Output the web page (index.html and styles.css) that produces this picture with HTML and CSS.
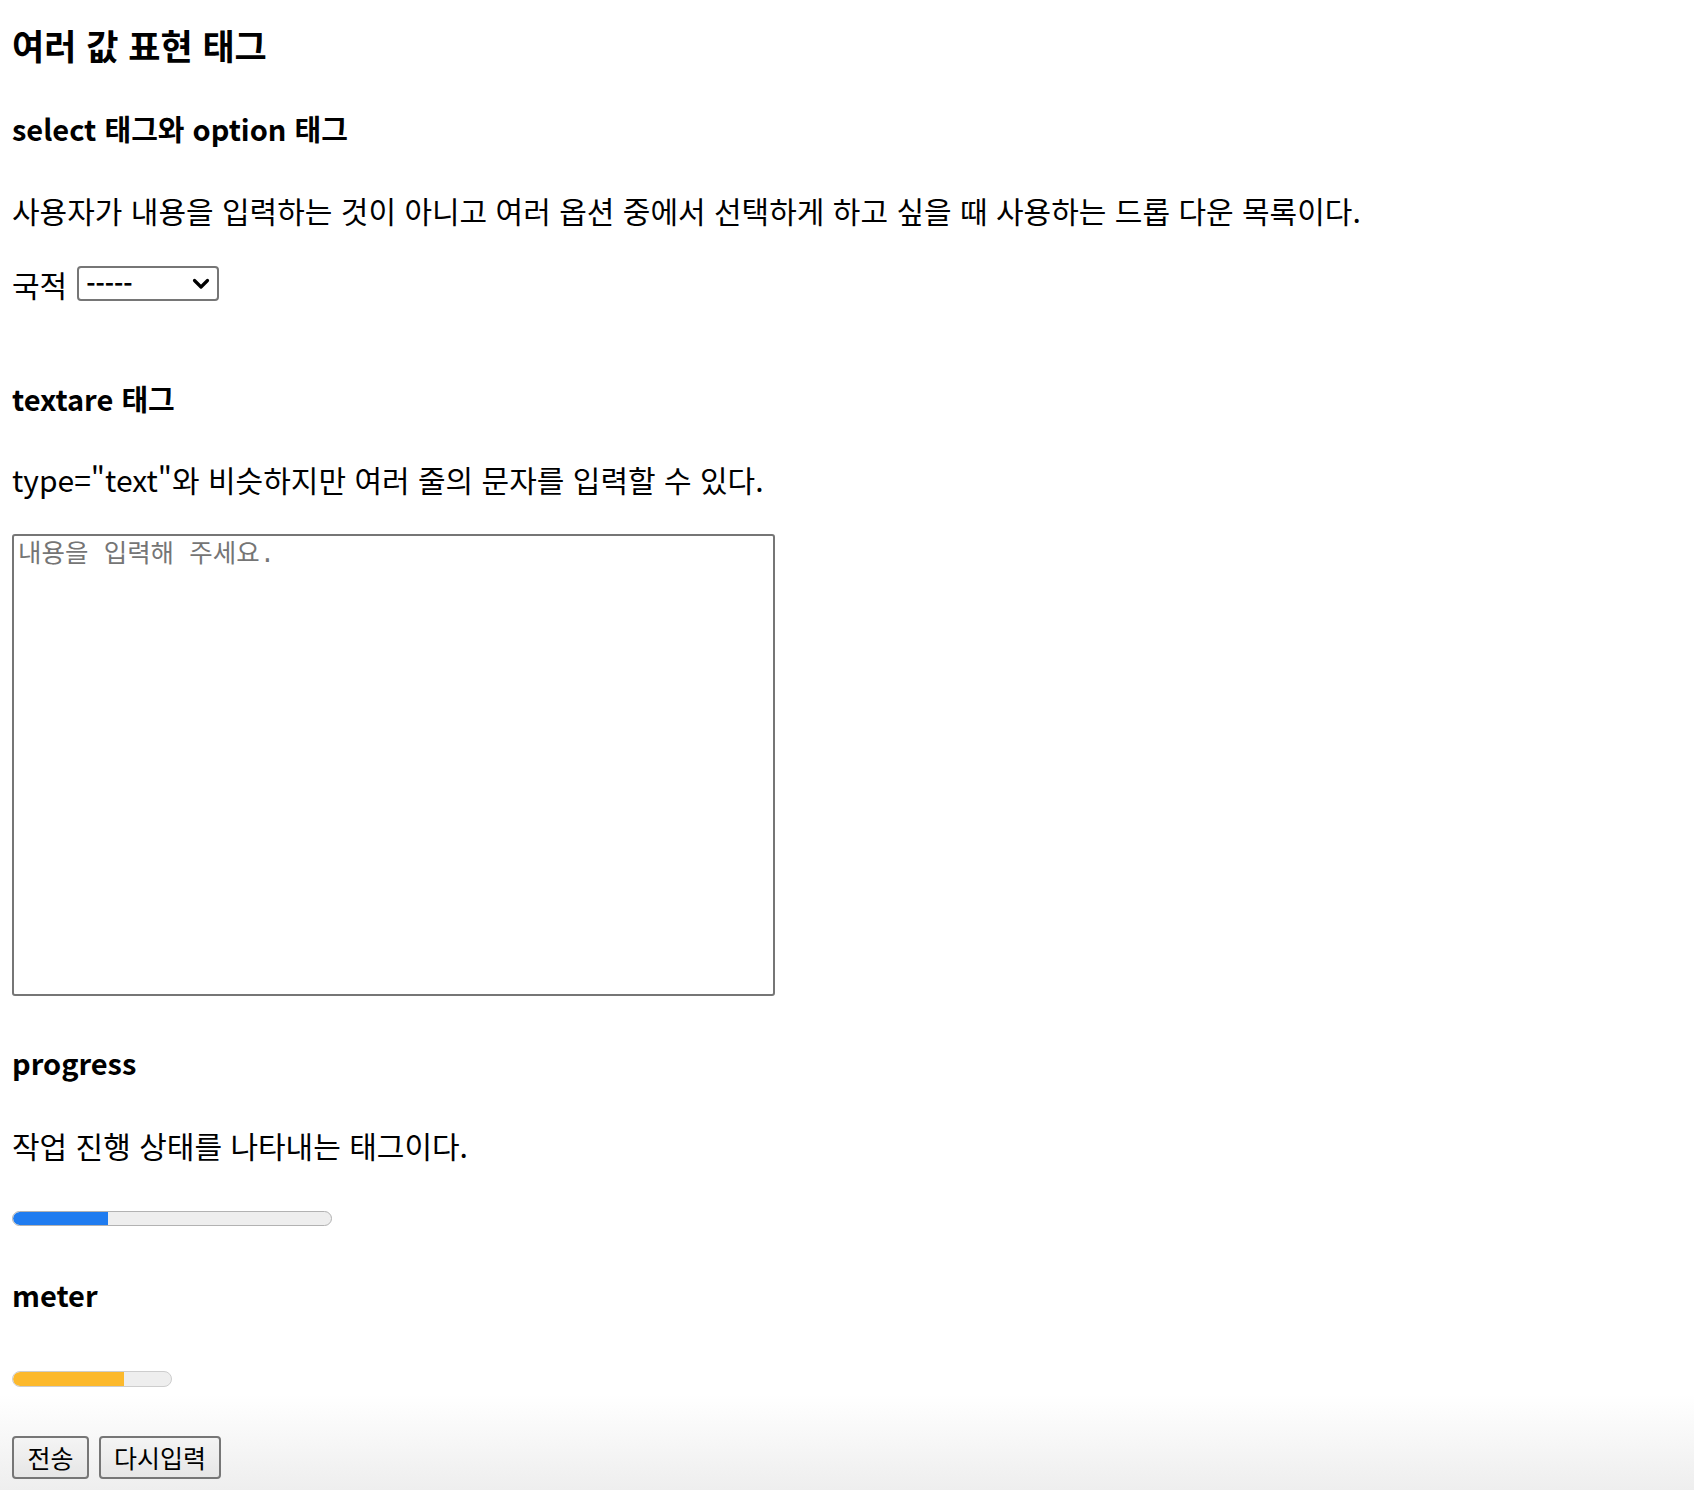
FILE: index.html
```html
<!DOCTYPE html>
<html lang="ko">
<head>
<meta charset="utf-8">
<title>여러 값 표현 태그</title>
<link rel="stylesheet" href="styles.css">
</head>
<body>
<form class="page">
  <h1 class="title">여러 값 표현 태그</h1>

  <h3 class="sub sub-select">select 태그와 option 태그</h3>
  <p class="desc desc-select">사용자가 내용을 입력하는 것이 아니고 여러 옵션 중에서 선택하게 하고 싶을 때 사용하는 드롭 다운 목록이다.</p>
  <div class="field">
    <label class="field-label" for="nation">국적</label>
    <span class="select-wrap">
      <select id="nation" class="select">
        <option>-----</option>
        <option>대한민국</option>
        <option>미국</option>
        <option>일본</option>
      </select>
      <svg class="chevron" width="18" height="12" viewBox="0 0 18 12" aria-hidden="true">
        <path d="M2.5 2.5 L9 9 L15.5 2.5" fill="none" stroke="#000" stroke-width="3.2" stroke-linecap="round" stroke-linejoin="round"/>
      </svg>
    </span>
  </div>

  <h3 class="sub sub-textarea">textare 태그</h3>
  <p class="desc desc-textarea">type="text"와 비슷하지만 여러 줄의 문자를 입력할 수 있다.</p>
  <textarea class="memo" placeholder="내용을 입력해 주세요."></textarea>

  <h3 class="sub sub-progress">progress</h3>
  <p class="desc desc-progress">작업 진행 상태를 나타내는 태그이다.</p>
  <progress class="bar" value="30" max="100"></progress>

  <h3 class="sub sub-meter">meter</h3>
  <meter class="gauge" value="0.7" min="0" max="1"></meter>

  <div class="actions">
    <button type="submit" class="btn btn-send">전송</button>
    <button type="reset" class="btn btn-reset">다시입력</button>
  </div>
</form>
</body>
</html>
```
FILE: styles.css
```css
html {
  background: linear-gradient(to bottom, #ffffff 0, #ffffff 1395px, #eeeeee 1490px);
  min-height: 100%;
}

body {
  margin: 0;
  padding: 0 12px;
  font-family: "Noto Sans CJK KR", "Noto Sans", sans-serif;
  color: #000;
}

.page {
  display: block;
}

.title {
  margin: 24px 0 0;
  font-size: 35px;
  line-height: 42px;
  font-weight: 700;
}

.sub {
  margin: 0;
  font-size: 29px;
  line-height: 36px;
  font-weight: 700;
}

.sub-select { margin-top: 44px; }
.sub-textarea { margin-top: 79px; }
.sub-progress { margin-top: 48px; }
.sub-meter { margin-top: 50px; }

.desc {
  margin: 0;
  font-size: 30px;
  line-height: 36px;
  font-weight: 400;
}

.desc-select { margin-top: 46px; }
.desc-textarea { margin-top: 45px; }
.desc-progress { margin-top: 47px; }

.field {
  margin-top: 38px;
  display: flex;
  align-items: center;
  gap: 10px;
  height: 35px;
}

.field-label {
  font-size: 30px;
  line-height: 36px;
}

.select-wrap {
  position: relative;
  display: inline-block;
  width: 142px;
  height: 35px;
}

.select {
  -webkit-appearance: none;
  appearance: none;
  box-sizing: border-box;
  width: 142px;
  height: 35px;
  margin: 0;
  padding: 0 30px 0 7px;
  border: 2px solid #767676;
  border-radius: 4px;
  background: #fff;
  color: #000;
  font-family: "Noto Sans CJK KR", sans-serif;
  font-size: 25px;
  font-weight: 700;
  line-height: 31px;
}

.chevron {
  position: absolute;
  right: 9px;
  top: 12px;
  pointer-events: none;
}

.memo {
  display: block;
  box-sizing: border-box;
  margin-top: 37px;
  width: 763px;
  height: 462px;
  padding: 5px 4px 2px;
  border: 2px solid #767676;
  border-radius: 3px;
  background: #fff;
  font-family: "Liberation Mono", "Noto Sans CJK KR", monospace;
  font-size: 25.5px;
  line-height: 30px;
  resize: none;
}

.memo::placeholder {
  color: #757575;
  opacity: 1;
}

.bar {
  display: block;
  margin-top: 48px;
  width: 320px;
  height: 15px;
  -webkit-appearance: none;
  appearance: none;
  border: none;
}

.bar::-webkit-progress-bar {
  background: #eeeeee;
  border: 1.5px solid #b2b2b2;
  border-radius: 8px;
  box-sizing: border-box;
  overflow: hidden;
}

.bar::-webkit-progress-value {
  background: #1f7cf0;
  border-radius: 8px 0 0 8px;
}

.gauge {
  display: block;
  margin-top: 59px;
  width: 160px;
  height: 16px;
  -webkit-appearance: none;
  appearance: none;
}

.gauge::-webkit-meter-bar {
  background: #eeeeee;
  border: 1.5px solid #cdcdcd;
  border-radius: 8px;
  box-sizing: border-box;
  height: 16px;
}

.gauge::-webkit-meter-optimum-value,
.gauge::-webkit-meter-suboptimum-value,
.gauge::-webkit-meter-even-less-good-value {
  background: #fcb92c;
  border-radius: 8px 0 0 8px;
}

.actions {
  margin-top: 49px;
  display: flex;
  gap: 10px;
}

.btn {
  box-sizing: border-box;
  height: 43px;
  margin: 0;
  padding: 0;
  border: 2px solid #767676;
  border-radius: 4px;
  background: linear-gradient(to bottom, #f4f4f4, #e6e6e6);
  color: #000;
  font-family: "Noto Sans CJK KR", sans-serif;
  font-size: 25px;
  line-height: 39px;
}

.btn-send { width: 77px; }
.btn-reset { width: 122px; }
```
